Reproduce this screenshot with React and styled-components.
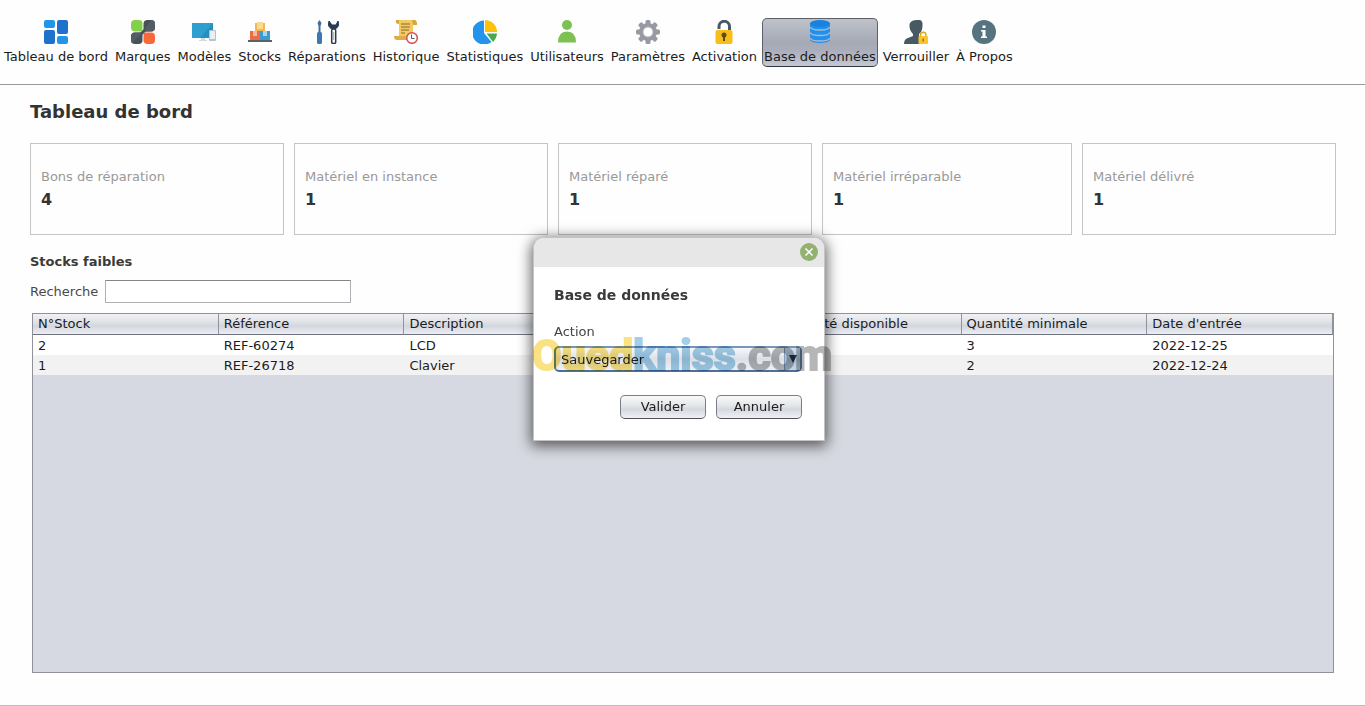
import React, { useState } from 'react';
import styled, { createGlobalStyle } from 'styled-components';

const GlobalStyle = createGlobalStyle`
  * {
    box-sizing: border-box;
  }

  body {
    margin: 0;
    background: #fefefe;
    color: #1c1c1c;
    font-family: 'DejaVu Sans', sans-serif;
    font-size: 13px;
    line-height: 16px;
  }

  button, input, select {
    font: inherit;
    color: inherit;
  }
`;

const Page = styled.div`
  display: flex;
  flex-direction: column;
  min-height: 100vh;
  border-bottom: 1px solid #bdbdbd;
`;

const Toolbar = styled.nav`
  display: flex;
  gap: 3px;
  padding: 18px 2px 17px;
  border-bottom: 1px solid #999;
`;

const ToolButton = styled.button`
  display: flex;
  flex-direction: column;
  align-items: center;
  gap: 5px;
  padding: 1px;
  border: 1px solid ${(props) => (props.$active ? '#5d6068' : 'transparent')};
  border-bottom-color: ${(props) => (props.$active ? '#33363d' : 'transparent')};
  border-radius: 5px;
  background: ${(props) => (props.$active ? 'linear-gradient(#bfc2c9, #a4a9b5 50%, #a8adb9 65%, #c3c8d4)' : 'none')};
  white-space: nowrap;

  svg {
    display: block;
    width: 24px;
    height: 24px;
  }
`;

const Main = styled.main`
  display: flex;
  flex: 1;
  flex-direction: column;
  padding: 16px 29px 32px 30px;
`;

const Title = styled.h1`
  margin: 0 0 20px;
  color: #333;
  font-size: 18px;
  line-height: 22px;
`;

const Cards = styled.section`
  display: grid;
  grid-template-columns: 254fr 254fr 254fr 250fr 254fr;
  gap: 10px;
`;

const Card = styled.div`
  padding: 25px 10px 24px;
  border: 1px solid #c4c4c4;
`;

const CardLabel = styled.div`
  color: #999;
`;

const CardValue = styled.div`
  margin-top: 4px;
  color: #333;
  font-size: 16px;
  font-weight: bold;
  line-height: 21px;
`;

const SubTitle = styled.h2`
  margin: 19px 0 10px;
  color: #3a3a3a;
  font-size: 13px;
  line-height: 16px;
`;

const SearchRow = styled.div`
  display: flex;
  align-items: center;
  gap: 7px;
  margin-bottom: 10px;
  color: #4a4a4a;
`;

const SearchInput = styled.input`
  width: 246px;
  height: 23px;
  padding: 2px 5px;
  border: 1px solid #b0b0b4;
  border-top-color: #85858a;
  background: #fff;
  outline: none;
`;

const TablePanel = styled.div`
  flex: 1;
  margin: 0 2px;
  border: 1px solid #8f929a;
  background: #d6d9e1;
`;

const Table = styled.table`
  width: 100%;
  border-collapse: separate;
  border-spacing: 0;
  table-layout: fixed;
`;

const HeadCell = styled.th`
  height: 21px;
  padding: 0 5px;
  border-right: 1px solid #8f939c;
  border-bottom: 1px solid #6f7480;
  background: linear-gradient(#f2f2f4, #e0e2e7 40%, #d3d6de 60%, #eceef2);
  font-weight: normal;
  text-align: left;
  white-space: nowrap;
`;

const Row = styled.tr`
  background: #fff;

  &:nth-child(even) {
    background: #f2f2f2;
  }
`;

const Cell = styled.td`
  height: 20px;
  padding: 2px 5px 0;
`;

const Overlay = styled.div`
  position: fixed;
  inset: 0;
  display: flex;
  align-items: flex-start;
  justify-content: center;
  padding: 237px 7px 0 0;
`;

const Dialog = styled.div`
  position: relative;
  width: 292px;
  border: 1px solid #c4c4c4;
  border-radius: 11px 11px 0 0;
  background: #fff;
  box-shadow: 0 3px 14px 2px rgba(0, 0, 0, 0.6);
`;

const DialogBar = styled.div`
  display: flex;
  justify-content: flex-end;
  padding: 5px 6px 6px;
  border-radius: 10px 10px 0 0;
  background: #e7e7e7;
`;

const CloseButton = styled.button`
  width: 18px;
  height: 18px;
  padding: 0;
  border: none;
  border-radius: 50%;
  background: #93b272;

  svg {
    display: block;
  }
`;

const DialogBody = styled.form`
  display: flex;
  flex-direction: column;
  padding: 18px 22px 21px 20px;
`;

const DialogTitle = styled.h2`
  margin: 0 0 19px;
  color: #3a3a3a;
  font-size: 14px;
  line-height: 20px;
`;

const FieldLabel = styled.label`
  margin-bottom: 6px;
  color: #444;
`;

const SelectBox = styled.div`
  position: relative;
  border: 2px solid #6c8db3;
  border-color: #7796b8 #5f80a8 #4f6f96;
  border-radius: 5px;
  background: linear-gradient(#f7f8fa, #dcdfe6 50%, #eef0f4);
`;

const Select = styled.select`
  display: block;
  width: 100%;
  height: 22px;
  padding: 1px 24px 0 5px;
  border: none;
  background: none;
  appearance: none;
  outline: none;
`;

const Arrow = styled.span`
  position: absolute;
  top: 0;
  right: 0;
  bottom: 0;
  display: flex;
  align-items: center;
  justify-content: center;
  width: 16px;
  border-left: 1px solid #7d9cbd;
  background: linear-gradient(#d3e0ee, #a9c0d8 55%, #c6d8e8);
  pointer-events: none;
`;

const Actions = styled.div`
  display: flex;
  justify-content: flex-end;
  gap: 10px;
  margin-top: 23px;
`;

const DialogButton = styled.button`
  width: 86px;
  height: 24px;
  padding: 0;
  border: 1px solid #7b7e86;
  border-bottom-color: #4e5158;
  border-radius: 5px;
  background: linear-gradient(#fafafb, #e3e5ea 45%, #d5d8df 60%, #f0f1f5);
`;

const Watermark = styled.div`
  position: absolute;
  top: 97px;
  left: -2px;
  font-family: Roboto, sans-serif;
  font-size: 43px;
  font-weight: bold;
  line-height: 40px;
  white-space: nowrap;
  mix-blend-mode: multiply;
  pointer-events: none;
`;

const Tint = styled.span`
  color: ${(props) => props.$color};
  -webkit-text-stroke: 2px ${(props) => props.$color};
`;

const DashboardIcon = () => (
  <svg viewBox="0 0 24 24">
    <rect width="11" height="8" rx="2" fill="#2196e8" />
    <rect x="13" width="11" height="14" rx="2" fill="#1f72cc" />
    <rect y="10" width="11" height="14" rx="2" fill="#1f72cc" />
    <rect x="13" y="16" width="11" height="8" rx="2" fill="#2196e8" />
  </svg>
);

const BrandsIcon = () => (
  <svg viewBox="0 0 24 24">
    <path d="M4 0h4q3.500 0 3.500 3.500v8H4q-4 0-4-4V4q0-4 4-4z" fill="#83d14b" />
    <path d="M16.500 0H20q4 0 4 4v3.500q0 4-4 4h-7.500V4q0-4 4-4z" fill="#485058" />
    <path d="M20 0q4 0 4 4v3.500q0 4-4 4h-7.500z" fill="#555d64" />
    <path d="M4 12.500h7.500V20q0 4-4 4H4q-4 0-4-4v-3.500q0-4 4-4z" fill="#485058" />
    <path d="M11.500 12.500H4q-4 0-4 4V20q0 2 1 3z" fill="#555d64" />
    <path d="M12.500 12.500H20q4 0 4 4V20q0 4-4 4h-3.500q-4 0-4-4z" fill="#f8693a" />
    <path d="m10 14 4-4" stroke="#485058" strokeWidth="3" />
  </svg>
);

const ModelsIcon = () => (
  <svg viewBox="0 0 24 24">
    <path d="M0 3h21v15H0z" fill="#2e9fce" />
    <path d="M21 3v15H8z" fill="#278fbd" />
    <path d="M9 18h4v2H9zM7 20h8v1H7z" fill="#cfdbe0" />
    <rect x="17" y="10" width="7" height="11" rx="1" fill="#b4c2ce" />
    <path d="M18 11h5v8h-5z" fill="#e9f0f5" />
  </svg>
);

const StocksIcon = () => (
  <svg viewBox="0 0 24 24">
    <path d="M7 3h10v9H7z" fill="#f4b752" />
    <path d="M9 2h6v7H9z" fill="#fbd98e" />
    <path d="M2 11h10v10H2z" fill="#ec6c45" />
    <path d="M5 11h4v5H5z" fill="#f7b79c" />
    <path d="M12 11h10v10H12z" fill="#3c9ccf" />
    <path d="M15 11h4v5h-4z" fill="#a5d8f0" />
    <path d="M0 20h24v2H0z" fill="#5d6068" />
  </svg>
);

const RepairsIcon = () => (
  <svg viewBox="0 0 24 24">
    <path d="m4.500 0 2 3-1 3v7h-2V6l-1-3z" fill="#3e6f9c" />
    <rect x="2" y="12" width="5" height="12" rx="1.500" fill="#3c7aae" />
    <path d="M14 1q-2 6 3 8h3q5-2 3-8l-2 4h-4z" fill="#263b50" stroke="#263b50" strokeLinejoin="round" />
    <rect x="16.700" y="9" width="4" height="14.500" rx="1.500" fill="#fff" stroke="#263b50" strokeWidth="1.500" />
    <path d="M18.700 12v8" stroke="#a5adb5" />
  </svg>
);

const HistoryIcon = () => (
  <svg viewBox="0 0 24 24">
    <path d="M5 0h15q3 0 3 5h-4v13H5z" fill="#f3ca62" />
    <path d="M2 0h3v4Q1 4 2 0zM18 0h3q2 1 2 5h-4z" fill="#d7a63d" />
    <path d="M0 16h13v4H3q-3 0-3-4z" fill="#e1ab47" />
    <path d="M7 4h9M7 7h9M7 10h8M7 13h4" stroke="#8b682d" />
    <circle cx="18" cy="18" r="5.300" fill="#fff" stroke="#d94f4f" strokeWidth="1.500" />
    <path d="M17.500 14.500v4h3" fill="none" stroke="#4e6370" />
  </svg>
);

const StatsIcon = () => (
  <svg viewBox="0 0 24 24">
    <path d="M11 .5V13l7.500 9A12 12 0 1 1 11 .5z" fill="#2294ec" />
    <path d="M12 0a12 12 0 0 1 12 12H12z" fill="#fbc10b" />
    <path d="M13.500 13.500H24q-.5 5-4 8.500z" fill="#4aa950" />
  </svg>
);

const UsersIcon = () => (
  <svg viewBox="0 0 24 24">
    <circle cx="12" cy="5" r="5" fill="#7dc155" />
    <path d="M3 22.500q0-11 9-11t9 11z" fill="#7dc155" />
  </svg>
);

const SettingsIcon = () => (
  <svg viewBox="0 0 24 24">
    <g fill="#9899a3">
      {[0, 45, 90, 135].map((angle) => (
        <rect key={angle} x="9.500" width="5" height="24" rx="1.500" transform={`rotate(${angle} 12 12)`} />
      ))}
      <circle cx="12" cy="12" r="9" />
    </g>
    <circle cx="12" cy="12" r="5" fill="#fff" stroke="#b7b8c0" />
  </svg>
);

const ActivationIcon = () => (
  <svg viewBox="0 0 24 24">
    <path d="M7 9V6.500a5 5 0 0 1 10.500 0V11" fill="none" stroke="#475a69" strokeWidth="3" />
    <rect x="3.500" y="10" width="17" height="14" rx="2" fill="#f8be17" />
    <circle cx="12" cy="15" r="2.500" fill="#5d4b1d" />
    <path d="M11 16h2v5h-2z" fill="#5d4b1d" />
  </svg>
);

const DatabaseIcon = () => (
  <svg viewBox="0 0 24 24">
    <path d="M2 3v17c2 4 18 4 20 0V3z" fill="#2190ee" />
    <path d="M2 7c2 4 18 4 20 0M2 12.500c2 4 18 4 20 0M2 18c2 4 18 4 20 0" fill="none" stroke="#b0bccd" strokeWidth="1.300" />
    <ellipse cx="12" cy="3.500" rx="10" ry="3.500" fill="#1882df" />
  </svg>
);

const LockUserIcon = () => (
  <svg viewBox="0 0 24 24">
    <path d="M5.500 4Q7 0 13 0h3q3 1 2.500 5.500 0 6-3.500 8.500v2l6 3v5H0q0-5 4-6l5-2v-2Q5 10 5.500 4z" fill="#475a64" />
    <rect x="14.500" y="16" width="9.500" height="8" rx="1" fill="#fac42c" />
    <path d="M16.500 16v-1a2.700 2.700 0 0 1 5.400 0v1" fill="none" stroke="#dfa81f" strokeWidth="1.500" />
    <path d="M19.200 18.500v3" stroke="#8a681b" strokeWidth="1.300" />
  </svg>
);

const AboutIcon = () => (
  <svg viewBox="0 0 24 24">
    <circle cx="12" cy="12" r="12" fill="#56747f" />
    <path d="M10.500 5.500h3V8h-3zM9 10h4.500v6.500H15V18H9v-1.500h1.500v-5H9z" fill="#fff" />
  </svg>
);

const tools = [
  { label: 'Tableau de bord', Icon: DashboardIcon },
  { label: 'Marques', Icon: BrandsIcon },
  { label: 'Modèles', Icon: ModelsIcon },
  { label: 'Stocks', Icon: StocksIcon },
  { label: 'Réparations', Icon: RepairsIcon },
  { label: 'Historique', Icon: HistoryIcon },
  { label: 'Statistiques', Icon: StatsIcon },
  { label: 'Utilisateurs', Icon: UsersIcon },
  { label: 'Paramètres', Icon: SettingsIcon },
  { label: 'Activation', Icon: ActivationIcon },
  { label: 'Base de données', Icon: DatabaseIcon },
  { label: 'Verrouiller', Icon: LockUserIcon },
  { label: 'À Propos', Icon: AboutIcon },
];

const cards = [
  { label: 'Bons de réparation', value: 4 },
  { label: 'Matériel en instance', value: 1 },
  { label: 'Matériel réparé', value: 1 },
  { label: 'Matériel irréparable', value: 1 },
  { label: 'Matériel délivré', value: 1 },
];

const columns = ['N°Stock', 'Référence', 'Description', '', 'Quantité disponible', 'Quantité minimale', "Date d'entrée"];

const rows = [
  ['2', 'REF-60274', 'LCD', '', '', '3', '2022-12-25'],
  ['1', 'REF-26718', 'Clavier', '', '', '2', '2022-12-24'],
];

function App() {
  const [search, setSearch] = useState('');
  const [action, setAction] = useState('Sauvegarder');
  const [open, setOpen] = useState(true);

  const close = () => setOpen(false);

  const handleSubmit = (e) => {
    e.preventDefault();
    close();
  };

  const visibleRows = rows.filter((row) => row.join(' ').toLowerCase().includes(search.toLowerCase()));

  return (
    <>
      <GlobalStyle />
      <Page>
        <Toolbar>
          {tools.map(({ label, Icon }) => (
            <ToolButton
              key={label}
              type="button"
              $active={open && label === 'Base de données'}
              onClick={() => label === 'Base de données' && setOpen(true)}
            >
              <Icon />
              {label}
            </ToolButton>
          ))}
        </Toolbar>
        <Main>
          <Title>Tableau de bord</Title>
          <Cards>
            {cards.map((card) => (
              <Card key={card.label}>
                <CardLabel>{card.label}</CardLabel>
                <CardValue>{card.value}</CardValue>
              </Card>
            ))}
          </Cards>
          <SubTitle>Stocks faibles</SubTitle>
          <SearchRow>
            <label htmlFor="search">Recherche</label>
            <SearchInput id="search" type="text" value={search} onChange={(e) => setSearch(e.target.value)} />
          </SearchRow>
          <TablePanel>
            <Table>
              <thead>
                <tr>
                  {columns.map((column, i) => (
                    <HeadCell key={i}>{column}</HeadCell>
                  ))}
                </tr>
              </thead>
              <tbody>
                {visibleRows.map((row) => (
                  <Row key={row[0]}>
                    {row.map((value, i) => (
                      <Cell key={i}>{value}</Cell>
                    ))}
                  </Row>
                ))}
              </tbody>
            </Table>
          </TablePanel>
        </Main>
      </Page>
      {open && (
        <Overlay>
          <Dialog role="dialog" aria-labelledby="dialog-title">
            <DialogBar>
              <CloseButton type="button" aria-label="Fermer" onClick={close}>
                <svg viewBox="0 0 18 18" width="18" height="18">
                  <path d="m5.500 5.500 7 7m0-7-7 7" stroke="#fff" strokeWidth="1.500" />
                </svg>
              </CloseButton>
            </DialogBar>
            <DialogBody onSubmit={handleSubmit}>
              <DialogTitle id="dialog-title">Base de données</DialogTitle>
              <FieldLabel htmlFor="action">Action</FieldLabel>
              <SelectBox>
                <Select id="action" value={action} onChange={(e) => setAction(e.target.value)}>
                  <option>Sauvegarder</option>
                </Select>
                <Arrow>
                  <svg viewBox="0 0 8 8" width="8" height="8">
                    <path d="M0 0h8L4 8z" fill="#26323f" />
                  </svg>
                </Arrow>
              </SelectBox>
              <Actions>
                <DialogButton type="submit">Valider</DialogButton>
                <DialogButton type="button" onClick={close}>Annuler</DialogButton>
              </Actions>
            </DialogBody>
            <Watermark>
              <Tint $color="#fae282">Oued</Tint>
              <Tint $color="#a2cee8">kniss</Tint>
              <Tint $color="#b6b6b6">.com</Tint>
            </Watermark>
          </Dialog>
        </Overlay>
      )}
    </>
  );
}

export default App;
